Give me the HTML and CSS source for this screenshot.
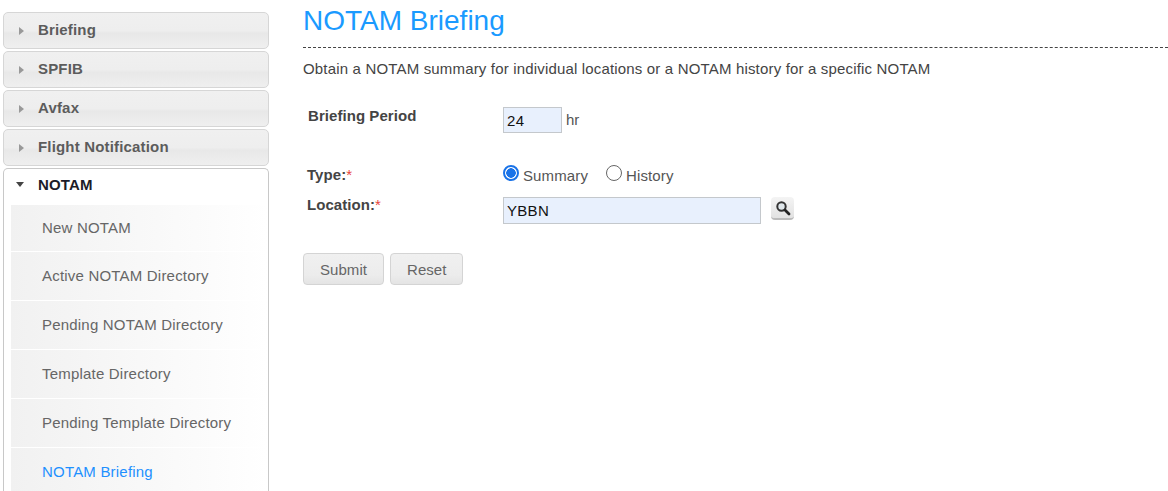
FILE: index.html
```html
<!DOCTYPE html>
<html lang="en">
<head>
  <meta charset="UTF-8">
  <meta name="viewport" content="width=device-width, initial-scale=1.0">
  <title>NOTAM Briefing</title>
  <link rel="stylesheet" href="styles.css">
</head>
<body>

  <div class="page">
    <div class="sidebar">
      <div class="menu-head"><span class="arrow-right"></span>Briefing</div>
      <div class="menu-head"><span class="arrow-right"></span>SPFIB</div>
      <div class="menu-head"><span class="arrow-right"></span>Avfax</div>
      <div class="menu-head"><span class="arrow-right"></span>Flight Notification</div>
      <div class="menu-open">
        <div class="menu-head-open"><span class="arrow-down"></span>NOTAM</div>
        <div class="menu-list">
          <a class="menu-item first-item">New NOTAM</a>
          <a class="menu-item">Active NOTAM Directory</a>
          <a class="menu-item">Pending NOTAM Directory</a>
          <a class="menu-item">Template Directory</a>
          <a class="menu-item">Pending Template Directory</a>
          <a class="menu-item current">NOTAM Briefing</a>
        </div>
      </div>
    </div>

    <div class="main">
      <h1>NOTAM Briefing</h1>
      <p class="intro">Obtain a NOTAM summary for individual locations or a NOTAM history for a specific NOTAM</p>

      <div class="period-row">
        <label class="field-label" for="period">Briefing Period</label>
        <input type="text" id="period" class="text-input period-input" value="24">
        <span class="unit">hr</span>
      </div>

      <div class="type-row">
        <span class="field-label">Type:<span class="req">*</span></span>
        <span class="radio on"></span><span class="radio-text">Summary</span>
        <span class="radio"></span><span class="radio-text">History</span>
      </div>

      <div class="location-row">
        <label class="field-label" for="location">Location:<span class="req">*</span></label>
        <input type="text" id="location" class="text-input location-input" value="YBBN">
        <span class="search-btn">
          <svg width="16" height="16" viewBox="0 0 16 16">
            <circle cx="6.5" cy="6.5" r="4.2" fill="#dfe6ea" stroke="#333" stroke-width="2"/>
            <path d="M10 10L14 14" stroke="#222" stroke-width="2.8" stroke-linecap="round"/>
          </svg>
        </span>
      </div>

      <div class="buttons">
        <button type="button">Submit</button>
        <button type="button">Reset</button>
      </div>
    </div>
  </div>

</body>
</html>
```

FILE: styles.css
```css
html, body {
  height: 100%;
}
body {
  margin: 0;
  overflow: hidden;
  background-color: #fff;
  font-family: "Liberation Sans", Arial, sans-serif;
  font-size: 15px;
  color: #555;
}
.page {
  display: flex;
  height: 491px;
  overflow: hidden;
}
.sidebar {
  width: 266px;
  margin: 12px 0 0 3px;
  flex: none;
}
.menu-head {
  display: flex;
  align-items: center;
  box-sizing: border-box;
  height: 37px;
  margin-bottom: 2px;
  padding-bottom: 2px;
  border: 1px solid #d6d6d6;
  border-radius: 5px;
  background: linear-gradient(#f0f0f0 0%, #eeeeee 50%, #e8e8e8 58%, #efefef 100%);
  font-size: 15px;
  font-weight: bold;
  letter-spacing: 0.17px;
  color: #5c5c5c;
}
.arrow-right {
  width: 0;
  height: 0;
  margin: 2px 14px 0 15px;
  border-left: 5px solid #999;
  border-top: 4px solid transparent;
  border-bottom: 4px solid transparent;
}
.menu-open {
  box-sizing: border-box;
  height: 340px;
  border: 1px solid #c8c8c8;
  border-bottom: 0;
  border-radius: 5px 5px 0 0;
}
.menu-head-open {
  display: flex;
  align-items: center;
  height: 36px;
  padding-bottom: 5px;
  box-sizing: border-box;
  font-size: 15px;
  font-weight: bold;
  letter-spacing: 0.17px;
  color: #1c1c28;
}
.arrow-down {
  width: 0;
  height: 0;
  margin: 0 14px 0 12px;
  border-top: 5px solid #444;
  border-left: 4.5px solid transparent;
  border-right: 4.5px solid transparent;
}
.menu-list {
  margin-left: 7px;
}
.menu-item {
  display: flex;
  align-items: center;
  box-sizing: border-box;
  height: 49px;
  padding-left: 31px;
  padding-bottom: 2px;
  border-bottom: 1px solid #fff;
  background: linear-gradient(to right, #f1f1f1, #ffffff);
  font-size: 15px;
  letter-spacing: 0.2px;
  color: #666;
}
.first-item {
  height: 47px;
}
.current {
  color: #1e90ff;
}
.main {
  flex: 1;
  min-width: 0;
  margin-left: 34px;
}
h1 {
  box-sizing: border-box;
  height: 48px;
  margin: 0;
  padding-top: 4px;
  border-bottom: 1px dashed #444;
  font-size: 28px;
  font-weight: normal;
  line-height: 34px;
  color: #1a9aff;
}
.intro {
  margin: 13px 0 0;
  font-size: 15px;
  line-height: 16px;
  letter-spacing: 0.17px;
  color: #444;
}
.field-label {
  width: 200px;
  flex: none;
  padding-left: 4px;
  box-sizing: border-box;
  font-size: 15px;
  font-weight: bold;
  letter-spacing: 0.06px;
  color: #444;
}
.req {
  font-weight: normal;
  color: #e8443a;
}
.text-input {
  box-sizing: border-box;
  padding: 0 3px;
  border: 1px solid #c4c8cc;
  background-color: #e8f0fd;
  font-family: "Liberation Sans", Arial, sans-serif;
  font-size: 15px;
  letter-spacing: 0.3px;
  color: #111;
}
.period-row {
  display: flex;
  margin-top: 30px;
}
.period-row .field-label {
  margin-top: 1px;
  padding-left: 5px;
  line-height: 16px;
}
.period-input {
  width: 59px;
  height: 26px;
}
.unit {
  margin: 4px 0 0 4px;
  color: #555;
}
.type-row {
  display: flex;
  align-items: center;
  margin-top: 32px;
  height: 18px;
}
.radio {
  box-sizing: border-box;
  width: 16px;
  height: 16px;
  border: 1px solid #666;
  border-radius: 50%;
  margin-right: 4px;
  margin-top: -3px;
}
.radio.on {
  border: 2px solid #1a73e8;
  background: radial-gradient(circle, #1a73e8 0 4.5px, #fff 5px);
}
.radio-text {
  margin-right: 18px;
  margin-top: 2px;
  letter-spacing: 0.12px;
  color: #555;
}
.location-row {
  display: flex;
  margin-top: 14px;
}
.location-row .field-label {
  line-height: 16px;
}
.location-input {
  width: 258px;
  height: 27px;
}
.search-btn {
  display: flex;
  align-items: center;
  justify-content: center;
  box-sizing: border-box;
  width: 23px;
  height: 23px;
  margin-left: 10px;
  border-radius: 4px;
  border-bottom: 2px solid #bbb;
  background: linear-gradient(#f4f4f4, #e2e2e2);
}
.buttons {
  display: flex;
  gap: 6px;
  margin-top: 29px;
}
button {
  box-sizing: border-box;
  height: 32px;
  padding: 0 16px;
  border: 1px solid #d4d4d4;
  border-radius: 4px;
  background: linear-gradient(#f0f0f0 0%, #ececec 70%, #e4e4e4 100%);
  font-family: "Liberation Sans", Arial, sans-serif;
  font-size: 15px;
  letter-spacing: 0.05px;
  color: #666;
}
```
